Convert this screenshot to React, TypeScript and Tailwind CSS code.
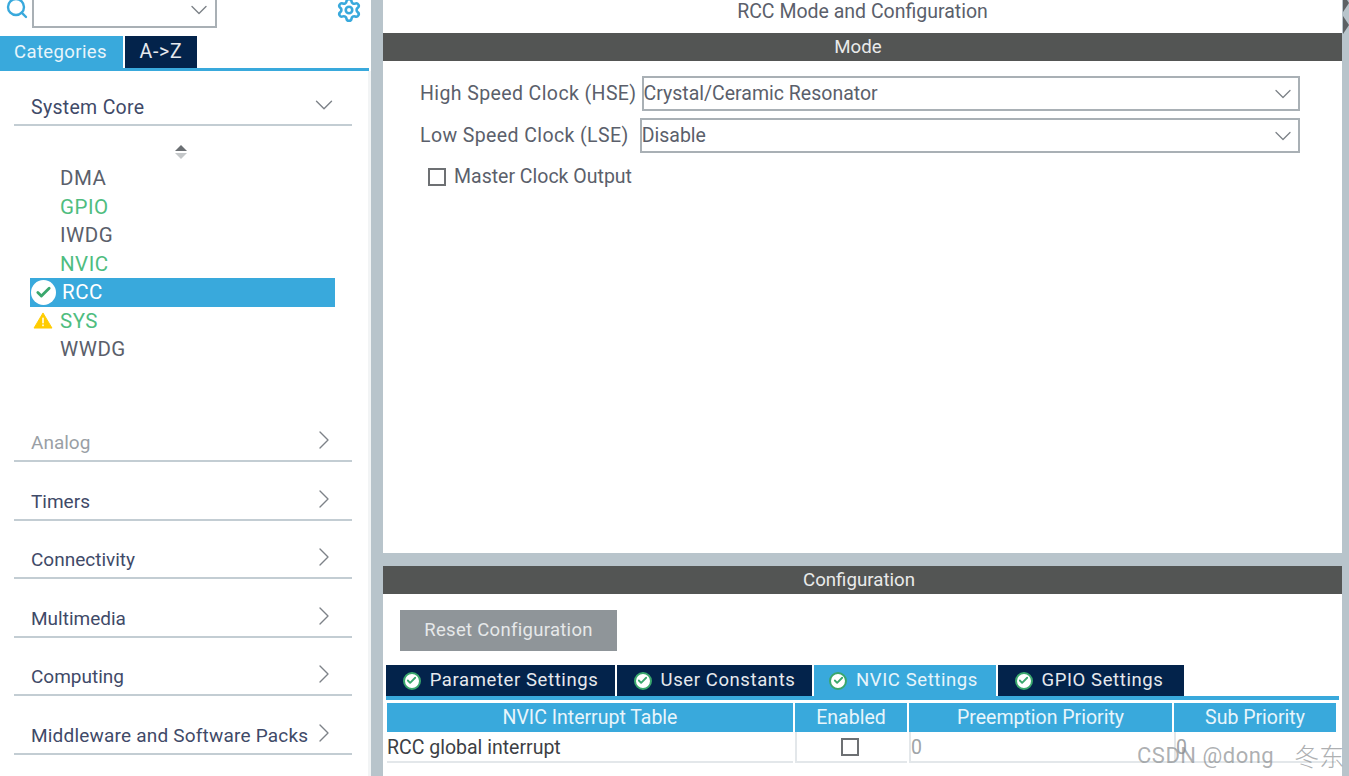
import { Check, ChevronDown, ChevronRight, Search, Settings } from 'lucide-react'

const peripherals = [
  { name: 'DMA', color: 'text-[#5b5f6b]' },
  { name: 'GPIO', color: 'text-[#4fbd7f]' },
  { name: 'IWDG', color: 'text-[#5b5f6b]' },
  { name: 'NVIC', color: 'text-[#4fbd7f]' },
  { name: 'RCC', color: 'text-white', selected: true },
  { name: 'SYS', color: 'text-[#4fbd7f]', warning: true },
  { name: 'WWDG', color: 'text-[#5b5f6b]' },
]

const categories = ['Timers', 'Connectivity', 'Multimedia', 'Computing']

function Category({ name, muted, wide }: { name: string; muted?: boolean; wide?: boolean }) {
  return (
    <div className="flex h-[58.5px] items-end justify-between border-b-2 border-[#c3cdd3] pb-[8px] pl-[17px] pr-[12px] text-[19px]">
      <span className={`whitespace-nowrap ${muted ? 'text-[#9a9fa5]' : 'text-[#3f4a68]'} ${wide ? 'tracking-[0.2px]' : ''}`}>{name}</span>
      <ChevronRight className="-mb-[4px] -ml-[8px] h-[32px] w-[32px] shrink-0 text-[#7d8288]" strokeWidth={1} />
    </div>
  )
}

function ClockSelect({ value, width }: { value: string; width: string }) {
  return (
    <div className={`flex h-[35px] items-center justify-between border-2 border-[#a9b0b5] pr-[1px] text-[#5b5f6b] ${width}`}>
      <span>{value}</span>
      <ChevronDown className="h-[28px] w-[28px] text-[#7d8288]" strokeWidth={1.1} />
    </div>
  )
}

function TabBadge() {
  return (
    <span className="flex h-[18px] w-[18px] items-center justify-center rounded-full border-[2px] border-[#3aa76d] bg-white">
      <Check className="h-[11px] w-[11px] text-[#3aa76d]" strokeWidth={4} />
    </span>
  )
}

function ConfigTab({ label, width, active }: { label: string; width: string; active?: boolean }) {
  return (
    <div className={`flex h-[31px] items-center justify-center gap-[9px] text-[18.5px] tracking-[0.6px] ${width} ${active ? 'bg-[#39a9dc] text-[#e8f5fb]' : 'bg-[#03234b] text-[#e6e9ee]'}`}>
      <TabBadge />
      <span>{label}</span>
    </div>
  )
}

export default function App() {
  return (
    <div className="relative flex h-[776px] w-[1349px] overflow-hidden bg-[#b8c4cb] font-['Roboto',sans-serif] text-[19.5px] leading-none">
      <aside className="flex h-full w-[371px] flex-col bg-white">
        <div className="flex h-[36px] items-start pl-[5px] pr-[9px]">
          <Search className="mt-[-4px] h-[24px] w-[24px] text-[#39a9dc]" strokeWidth={2.4} />
          <div className="ml-[3px] mt-[-8px] flex h-[36px] w-[185px] items-center justify-end border-2 border-[#a9b0b5] pr-[2px]">
            <ChevronDown className="h-[28px] w-[28px] text-[#7d8288]" strokeWidth={1.2} />
          </div>
          <Settings className="ml-auto mt-[-3px] h-[26px] w-[26px] text-[#39a9dc]" strokeWidth={2.4} />
        </div>
        <div className="flex h-[35px] w-[369px] gap-[2px] border-b-[3px] border-[#39a9dc]">
          <div className="flex w-[123px] items-center justify-center bg-[#39a9dc] pr-[2px] text-[18.5px] tracking-[0.4px] text-[#e8f5fb]">Categories</div>
          <div className="flex w-[72px] items-center justify-center bg-[#03234b] tracking-[0.8px] text-[#e6e9ee]">A-&gt;Z</div>
        </div>
        <div className="flex flex-1 flex-col border-r-[3px] border-[#f2f4f5] pl-[14px] pr-[16px]">
          <div className="flex h-[55px] items-end justify-between border-b-2 border-[#c3cdd3] pb-[7px] pl-[17px] pr-[13px]">
            <span className="tracking-[0.3px] text-[#3f4a68]">System Core</span>
            <ChevronDown className="-mb-[3px] h-[30px] w-[30px] text-[#7d8288]" strokeWidth={1.1} />
          </div>
          <div className="flex h-[38px] flex-col items-center justify-center gap-[2px] pr-[4px] pt-[13px]">
            <span className="h-0 w-0 border-x-[6px] border-b-[6px] border-x-transparent border-b-[#6b6f73]" />
            <span className="h-0 w-0 border-x-[6px] border-t-[6px] border-x-transparent border-t-[#c4c7c9]" />
          </div>
          <div className="flex w-[321px] flex-col pl-4 text-[20.5px] tracking-[0.5px]">
            {peripherals.map((item) => (
              <div key={item.name} className={`flex h-[28.5px] items-center ${item.selected ? 'bg-[#39a9dc]' : ''}`}>
                <span className="flex w-[30px] shrink-0 items-center justify-center">
                  {item.selected && (
                    <span className="flex h-[25px] w-[25px] -translate-x-[2px] items-center justify-center rounded-full bg-white">
                      <Check className="h-[17px] w-[17px] text-[#3aa76d]" strokeWidth={4} />
                    </span>
                  )}
                  {item.warning && (
                    <svg viewBox="0 0 20 18" className="h-[17px] w-[20px] -translate-x-[2px]">
                      <path d="M10 1 L19.5 17 H0.5 Z" fill="#ffcc00" stroke="#ffcc00" strokeLinejoin="round" />
                      <rect x="9.2" y="6" width="1.6" height="6" fill="#fff" />
                      <rect x="9.2" y="13.2" width="1.6" height="1.8" fill="#fff" />
                    </svg>
                  )}
                </span>
                <span className={`${item.color} ${item.selected ? 'ml-[2px]' : ''}`}>{item.name}</span>
              </div>
            ))}
          </div>
          <div className="mt-[40px]">
            <Category name="Analog" muted />
            {categories.map((name) => (
              <Category key={name} name={name} />
            ))}
            <Category name="Middleware and Software Packs" wide />
          </div>
        </div>
      </aside>

      <main className="ml-[12px] flex h-full w-[959px] flex-col gap-[13px]">
        <section className="flex h-[553px] flex-col bg-white text-[#5b5f6b]">
          <div className="flex h-[33px] items-center justify-center pb-[10px]">RCC Mode and Configuration</div>
          <div className="flex h-[28px] items-center justify-center bg-[#535554] pr-[9px] pt-[1px] text-[18.7px] text-[#e9eaea]">Mode</div>
          <div className="flex flex-col gap-[7px] pl-[37px] pt-[15px]">
            <div className="flex items-center gap-[5px]">
              <span className="tracking-[0.4px]">High Speed Clock (HSE)</span>
              <ClockSelect value="Crystal/Ceramic Resonator" width="w-[658px]" />
            </div>
            <div className="flex items-center gap-[11px]">
              <span className="tracking-[0.4px]">Low Speed Clock (LSE)</span>
              <ClockSelect value="Disable" width="w-[660px]" />
            </div>
            <label className="ml-[8px] mt-[7px] flex items-center gap-[8px]">
              <span className="h-[18px] w-[18px] border-2 border-[#6d7073]" />
              <span>Master Clock Output</span>
            </label>
          </div>
        </section>

        <section className="flex flex-1 flex-col bg-white text-[#5b5f6b]">
          <div className="flex h-[28px] shrink-0 items-center justify-center bg-[#535554] pr-[7px] text-[18.7px] text-[#e9eaea]">Configuration</div>
          <div className="ml-[17px] mt-[16px] flex h-[41px] w-[217px] items-center justify-center bg-[#8f9599] text-[18.5px] tracking-[0.3px] text-[#e6e8e9]">
            Reset Configuration
          </div>
          <div className="ml-[3px] mt-[14px] flex w-[953px] gap-[2px] border-b-[4px] border-[#39a9dc]">
            <ConfigTab label="Parameter Settings" width="w-[229px]" />
            <ConfigTab label="User Constants" width="w-[195px]" />
            <ConfigTab label="NVIC Settings" width="w-[182px] pr-[3px]" active />
            <ConfigTab label="GPIO Settings" width="w-[186px] pr-[4px]" />
          </div>
          <div className="ml-[4px] mt-[3px] grid w-[949px] grid-cols-[406px_112px_263px_162px] gap-x-[2px]">
            {['NVIC Interrupt Table', 'Enabled', 'Preemption Priority', 'Sub Priority'].map((title) => (
              <div key={title} className="flex h-[29px] items-center justify-center bg-[#39a9dc] text-[#e8f5fb]">
                {title}
              </div>
            ))}
            <div className="flex h-[31px] items-center border-b-2 border-[#e3e7ea] pt-[2px] text-[#3d3f45]">RCC global interrupt</div>
            <div className="flex h-[31px] items-center justify-center border-b-2 border-l-2 border-[#e3e7ea] pr-[5px]">
              <span className="h-[18px] w-[18px] border-2 border-[#6d7073]" />
            </div>
            <div className="flex h-[31px] items-center border-b-2 border-l-2 border-[#e3e7ea] pt-[2px] text-[#a0a4a8]">0</div>
            <div className="flex h-[31px] items-center border-b-2 border-l-2 border-[#e3e7ea] pt-[2px] text-[#a0a4a8]">0</div>
          </div>
        </section>
      </main>

      {/* splitter arrows on the right edge */}
      <span className="absolute left-[1343px] top-[-6px] h-0 w-0 border-y-[9px] border-l-[6px] border-y-transparent border-l-[#5c6063]" />
      <span className="absolute left-[1343px] top-[16px] h-0 w-0 border-y-[9px] border-l-[6px] border-y-transparent border-l-[#5c6063]" />

      <div className="absolute left-[1137px] top-[743px] flex items-center font-['Roboto',sans-serif] text-[22px] tracking-[0.5px] text-[#8a8d90]/70">
        <span>CSDN @dong</span>
        <span className="ml-[20px] font-['Noto_Sans_CJK_SC',sans-serif] text-[25px] font-light tracking-normal">冬东</span>
      </div>
    </div>
  )
}
